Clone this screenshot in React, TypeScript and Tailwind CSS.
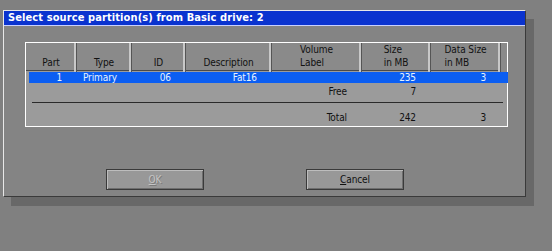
import { type FC, type ReactNode } from 'react';

const cols = [51, 55, 54, 86, 90, 69, 70];
const grid = 'grid grid-cols-[51px_55px_54px_86px_90px_69px_70px_1fr]';

const Head: FC<{ lines: string[] }> = ({ lines }) => (
  <div className="flex items-end justify-center pb-[3px] border-r border-r-[#555] shadow-[inset_-2px_0_0_#c8c8c8]">
    <div className="flex flex-col items-start leading-[13px]">
      {lines.map((l) => (
        <span key={l}>{l}</span>
      ))}
    </div>
  </div>
);

const Row: FC<{ cells: string[]; selected?: boolean; className?: string; children?: ReactNode }> = ({ cells, selected, className }) => (
  <div className={`${grid} h-[11px] leading-[11px] ${selected ? 'bg-[#0b5ef2] text-[#e6f2ff] mx-[3px] -mr-[1px]' : 'text-[#111] mx-[3px]'} ${className ?? ''}`}>
    {cols.map((w, i) => (
      <div key={w + '-' + i} className={`text-right pr-[18px] ${i === 0 ? '-ml-[3px]' : ''}`}>
        {cells[i] ?? ''}
      </div>
    ))}
    <div />
  </div>
);

export default function App() {
  return (
    <div className="w-[552px] h-[251px] bg-[#808080] overflow-hidden pt-[10px] pl-[3px] text-[10px] tracking-[-0.1px] font-['DejaVu_Sans_Condensed',sans-serif]">
      <div className="w-[523px] h-[187px] bg-[#848484] border-t border-l border-t-[#e8e8e8] border-l-[#e8e8e8] border-r border-b border-r-[#3a3a3a] border-b-[#3a3a3a] shadow-[8px_9px_0_#686868] flex flex-col">
        <div className="h-[15px] bg-[#0a33cf] border-b border-b-[#c8d0ff] text-white font-bold text-[11px] tracking-[0.1px] leading-[14px] pl-[4px]">
          Select source partition(s) from Basic drive: 2
        </div>

        <div className="ml-[21px] mt-[16px] w-[483px] h-[85px] border border-white bg-[#9b9b9b] flex flex-col">
          <div className={`${grid} h-[28px] bg-[#8a8a8a] border-b border-b-[#4a4a4a] text-[#111]`}>
            <Head lines={['Part']} />
            <Head lines={['Type']} />
            <Head lines={['ID']} />
            <Head lines={['Description']} />
            <Head lines={['Volume', 'Label']} />
            <Head lines={['Size', 'in MB']} />
            <Head lines={['Data Size', 'in MB']} />
            <div className="bg-[#8a8a8a]" />
          </div>

          <Row selected className="mt-[1px]" cells={['1', 'Primary', '06', 'Fat16', '', '235', '3']} />
          <Row className="mt-[2px] h-[13px] leading-[13px]" cells={['', '', '', '', 'Free', '7', '']} />
          <div className="mt-[4px] ml-[6px] mr-[4px] h-px bg-[#2a2a2a]" />
          <Row className="mt-[8px] h-[13px] leading-[13px]" cells={['', '', '', '', 'Total', '242', '3']} />
        </div>

        <div className="flex mt-[42px] ml-[102px]">
          <button className="w-[98px] h-[21px] bg-[#989898] border border-[#3a3a3a] shadow-[inset_1px_1px_0_#bdbdbd,inset_-1px_-1px_0_#6e6e6e] text-[#c4c4c4] [text-shadow:1px_1px_0_#7a7a7a] leading-[19px]">
            <span className="underline">O</span>K
          </button>
          <button className="ml-[102px] w-[98px] h-[21px] bg-[#989898] border border-[#3a3a3a] shadow-[inset_1px_1px_0_#bdbdbd,inset_-1px_-1px_0_#6e6e6e] text-[#111] leading-[19px]">
            <span className="underline">C</span>ancel
          </button>
        </div>
      </div>
    </div>
  );
}
